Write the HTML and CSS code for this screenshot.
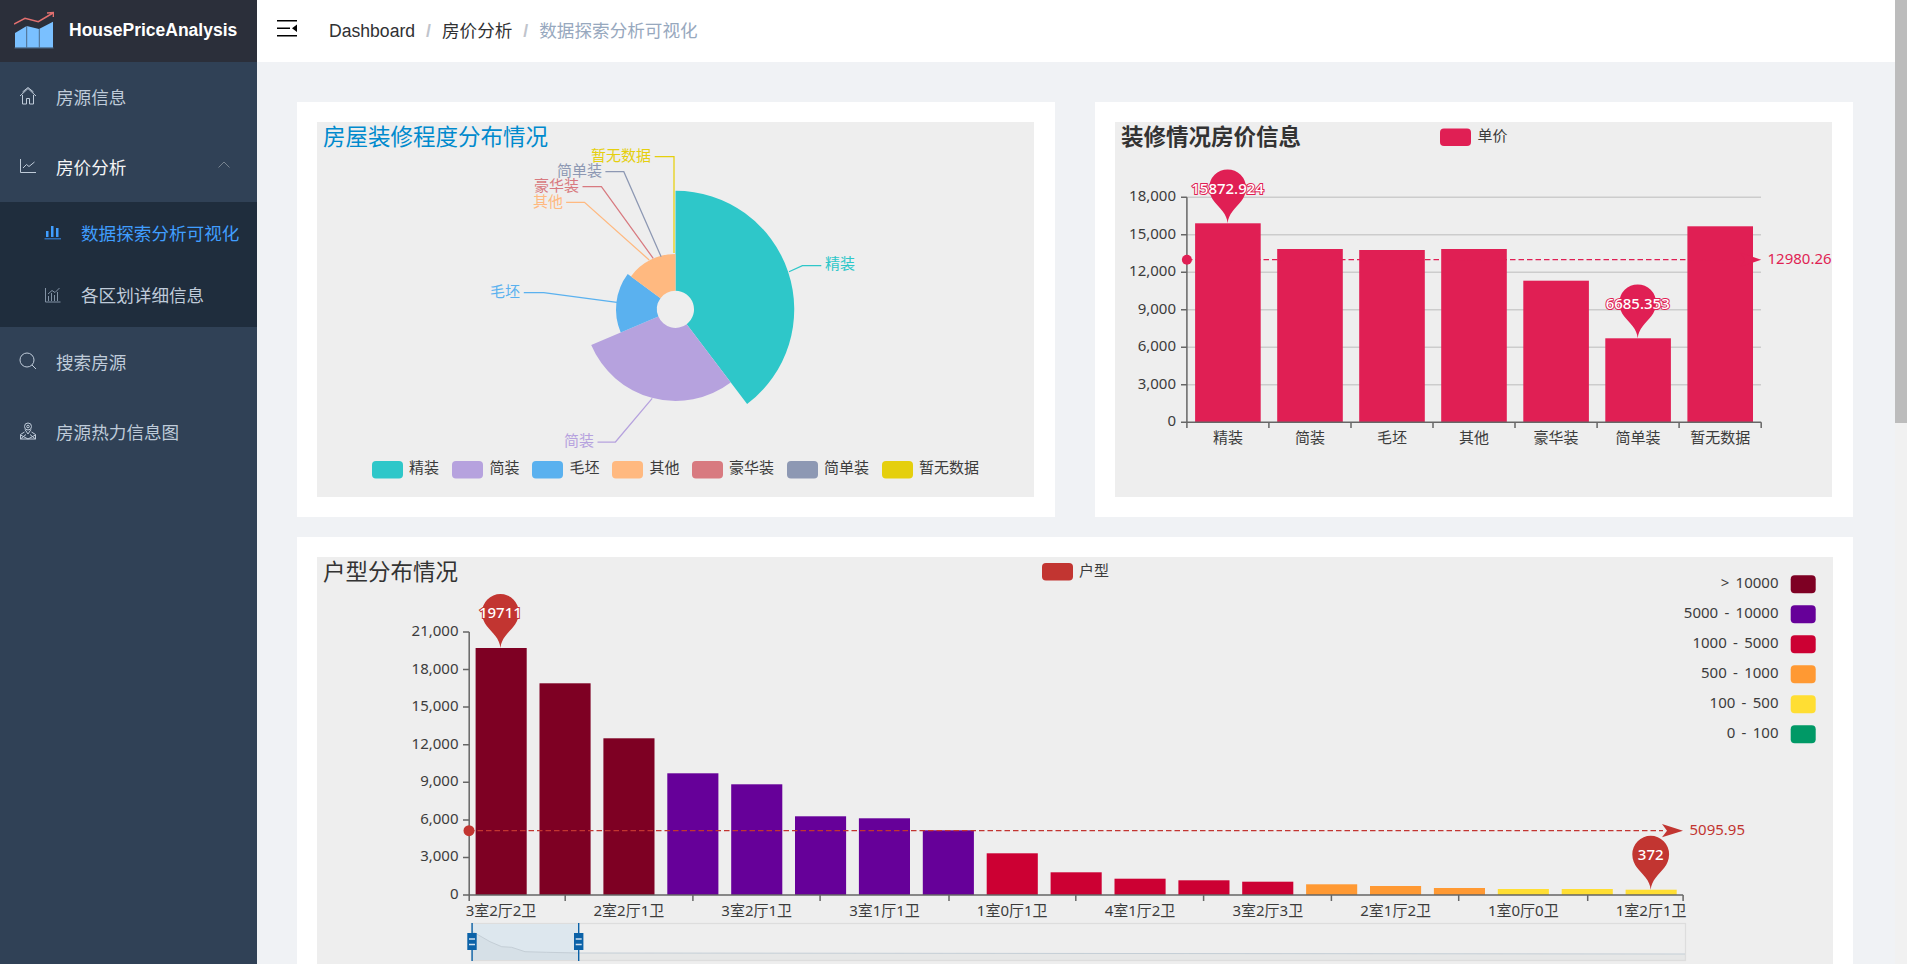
FILE: index.html
```html
<!DOCTYPE html>
<html lang="zh-CN">

<head>
    <meta charset="UTF-8">
    <title>HousePriceAnalysis</title>
    <link rel="stylesheet" href="styles.css">
</head>

<body>
    <aside class="sidebar">
        <div class="logo">
            <svg class="logo-icon" viewBox="0 0 40 38">
                <path class="logo-bars" d="M1 22 L12.700 15 L25 18 L39 10.700 V36.700 H1Z" />
                <path class="logo-gaps" d="M12.700 15 V36.700 M25.300 18 V36.700 M.5 37 H39.500" />
                <path class="logo-arrow" d="M0 13 L11 7.300 L24.300 10.700 L39 2 M33 2 L39.800 1.500 L39.300 6" />
            </svg>
            <span class="logo-text">HousePriceAnalysis</span>
        </div>
        <ul class="menu">
            <li class="menu-item">
                <svg class="icon" viewBox="0 0 18 18">
                    <path d="M1 9 L9 1.500 L17 9 M3.500 5 L9 .5 L14.500 5 M3.500 8 V17 H7.500 V11.500 H10.500 V17 H14.500 V8" />
                </svg>
                <span>房源信息</span>
            </li>
            <li class="menu-item is-open">
                <svg class="icon" viewBox="0 0 18 18">
                    <path d="M1.500 2 V15.500 H17 M4 11 L7.500 7.500 L10 9.500 L15.500 5" />
                </svg>
                <span>房价分析</span>
                <svg class="chevron" viewBox="0 0 12 7">
                    <path d="M.5 6.500 L6 1 L11.500 6.500" />
                </svg>
            </li>
            <li class="submenu">
                <div class="submenu-item is-active">
                    <svg class="icon icon-fill" viewBox="0 0 18 18">
                        <path d="M2 8 H4.500 V14 H2Z M7 3 H9.500 V14 H7Z M12 5 H14.500 V14 H12Z" />
                        <path class="icon-base" d="M.5 15 H17 V16.500 H.5Z" />
                    </svg>
                    <span>数据探索分析可视化</span>
                </div>
                <div class="submenu-item">
                    <svg class="icon icon-dim" viewBox="0 0 18 18">
                        <path d="M1.500 2 V16 H16.500 M4.500 15 V10 M7.500 15 V7 M10.500 15 V9 M13.500 15 V6 M4 8 L8 4.500 L11 6.500 L15.500 2" />
                    </svg>
                    <span>各区划详细信息</span>
                </div>
            </li>
            <li class="menu-item">
                <svg class="icon" viewBox="0 0 18 18">
                    <circle cx="8" cy="8" r="7" />
                    <path d="M13 13 L17 17" />
                </svg>
                <span>搜索房源</span>
            </li>
            <li class="menu-item">
                <svg class="icon" viewBox="0 0 18 18">
                    <circle cx="9" cy="4.500" r="3.500" />
                    <circle cx="9" cy="4.500" r="1.300" />
                    <path d="M6 7.500 L9 12 L12 7.500 M5.500 10 L1.500 12.500 V17 H16.500 V12.500 L12.500 10 M1.500 13 L9 17 M16.500 13 L9 17 M1.500 17 L7 12.500 M16.500 17 L11 12.500" />
                </svg>
                <span>房源热力信息图</span>
            </li>
        </ul>
    </aside>

    <div class="main">
        <header class="navbar">
            <svg class="hamburger" viewBox="0 0 20 17">
                <path d="M0 0 H20 V1.500 H0Z M0 7.500 H13 V9 H0Z M0 15 H20 V16.500 H0Z M20 4.500 V12 L15 8.250Z" />
            </svg>
            <nav class="breadcrumb">
                <span class="crumb">Dashboard</span>
                <span class="sep">/</span>
                <span class="crumb">房价分析</span>
                <span class="sep">/</span>
                <span class="crumb crumb-last">数据探索分析可视化</span>
            </nav>
        </header>

        <section class="content">
            <div class="row">
                <div class="card">
                    <div class="chart">
                        <svg class="plot" width="717" height="375" viewBox="0 0 717 375">
                            <text class="title title-blue" x="6" y="15">房屋装修程度分布情况</text>

                            <path class="c-jing" d="M358.5 68.7 A118.7 118.7 0 0 1 430.1 282.1 L369.7 202.2 A18.6 18.6 0 0 0 358.5 168.8Z" />
                            <path class="c-jian" d="M413.7 260.4 A91.5 91.5 0 0 1 274.2 223 L341.4 194.6 A18.6 18.6 0 0 0 369.7 202.2Z" />
                            <path class="c-mao" d="M303.7 210.6 A59.5 59.5 0 0 1 310.7 152 L343.5 176.3 A18.6 18.6 0 0 0 341.4 194.6Z" />
                            <path class="c-qi" d="M313.9 154.4 A55.5 55.5 0 0 1 358.5 131.900 L358.5 168.8 A18.6 18.6 0 0 0 343.5 176.3Z" />

                            <path class="guide g-jing" d="M472 149.700 L485.400 143.700 H504.300" />
                            <path class="guide g-mao" d="M299.900 180.300 L226.700 170.700 H206.800" />
                            <path class="guide g-jian" d="M335.200 276.300 L298.400 320 H280.500" />
                            <path class="guide g-qi" d="M332.200 138 L267.500 80.300 H249.100" />
                            <path class="guide g-hao" d="M336.200 136.300 L284.400 64.700 H265.500" />
                            <path class="guide g-dan" d="M344.100 134.700 L306.800 49.700 H288.400" />
                            <path class="guide g-zan" d="M357 131 V34.700 H337.700" />

                            <text class="label t-jing" x="508" y="142">精装</text>
                            <text class="label t-mao end" x="203" y="170">毛坯</text>
                            <text class="label t-jian end" x="277" y="319">简装</text>
                            <text class="label t-qi end" x="246" y="80">其他</text>
                            <text class="label t-hao end" x="262" y="64">豪华装</text>
                            <text class="label t-dan end" x="285" y="49">简单装</text>
                            <text class="label t-zan end" x="334" y="34">暂无数据</text>

                            <rect class="c-jing" x="55" y="339" width="31" height="17.500" rx="4" />
                            <text class="label" x="92" y="345.500">精装</text>
                            <rect class="c-jian" x="135" y="339" width="31" height="17.500" rx="4" />
                            <text class="label" x="172.500" y="345.500">简装</text>
                            <rect class="c-mao" x="215" y="339" width="31" height="17.500" rx="4" />
                            <text class="label" x="252.500" y="345.500">毛坯</text>
                            <rect class="c-qi" x="295" y="339" width="31" height="17.500" rx="4" />
                            <text class="label" x="332.500" y="345.500">其他</text>
                            <rect class="c-hao" x="375" y="339" width="31" height="17.500" rx="4" />
                            <text class="label" x="412" y="345.500">豪华装</text>
                            <rect class="c-dan" x="470" y="339" width="31" height="17.500" rx="4" />
                            <text class="label" x="507" y="345.500">简单装</text>
                            <rect class="c-zan" x="565" y="339" width="31" height="17.500" rx="4" />
                            <text class="label" x="602" y="345.500">暂无数据</text>
                        </svg>
                    </div>
                </div>

                <div class="card">
                    <div class="chart">
                        <svg class="plot" width="717" height="375" viewBox="0 0 717 375">
                            <defs>
                                <path id="pin" d="M0 0 C-.6 -5 -2 -8 -5 -12 C-10 -19 -18.400 -24 -18.400 -35.500 A18.400 18.400 0 0 1 18.400 -35.500 C18.400 -24 10 -19 5 -12 C2 -8 .6 -5 0 0Z" />
                            </defs>
                            <text class="title title-bold" x="6" y="15">装修情况房价信息</text>
                            <rect class="c-rose" x="325" y="6.500" width="31" height="17.500" rx="4" />
                            <text class="label" x="362.500" y="13.500">单价</text>

                            <path class="grid" d="M72 75.300 H646 M72 112.800 H646 M72 150.300 H646 M72 187.800 H646 M72 225.300 H646 M72 262.800 H646" />

                            <rect class="c-rose" x="80.100" y="101.300" width="65.600" height="199" />
                            <rect class="c-rose" x="162.200" y="127" width="65.600" height="173.300" />
                            <rect class="c-rose" x="244.200" y="128" width="65.600" height="172.300" />
                            <rect class="c-rose" x="326.200" y="127" width="65.600" height="173.300" />
                            <rect class="c-rose" x="408.300" y="158.700" width="65.600" height="141.600" />
                            <rect class="c-rose" x="490.300" y="216.300" width="65.600" height="84" />
                            <rect class="c-rose" x="572.400" y="104.300" width="65.600" height="196" />

                            <path class="axis" d="M71.900 75.300 V300.300 H646.200 M66 75.300 H71.900 M66 112.800 H71.900 M66 150.300 H71.900 M66 187.800 H71.900 M66 225.300 H71.900 M66 262.800 H71.900 M66 300.300 H71.900 M71.900 300.300 V306 M153.900 300.300 V306 M236 300.300 V306 M318 300.300 V306 M400 300.300 V306 M482.100 300.300 V306 M564.100 300.300 V306 M646.200 300.300 V306" />

                            <text class="label end" x="61" y="74">18,000</text>
                            <text class="label end" x="61" y="111.500">15,000</text>
                            <text class="label end" x="61" y="149">12,000</text>
                            <text class="label end" x="61" y="186.500">9,000</text>
                            <text class="label end" x="61" y="224">6,000</text>
                            <text class="label end" x="61" y="261.500">3,000</text>
                            <text class="label end" x="61" y="299">0</text>

                            <text class="label mid" x="112.900" y="315.500">精装</text>
                            <text class="label mid" x="195" y="315.500">简装</text>
                            <text class="label mid" x="277" y="315.500">毛坯</text>
                            <text class="label mid" x="359" y="315.500">其他</text>
                            <text class="label mid" x="441.100" y="315.500">豪华装</text>
                            <text class="label mid" x="523.100" y="315.500">简单装</text>
                            <text class="label mid" x="605.200" y="315.500">暂无数据</text>

                            <path class="mean mean-rose" d="M72 137.700 H640" />
                            <circle class="c-rose" cx="71.900" cy="137.700" r="5" />
                            <path class="c-rose" d="M646.200 137.700 L625 130.500 L630 137.700 L625 145Z" />
                            <text class="label t-rose" x="652.500" y="137">12980.26</text>

                            <use class="c-rose" href="#pin" x="112.600" y="101.300" />
                            <text class="pin-text pin-rose" x="112.600" y="67.300">15872.924</text>
                            <use class="c-rose" href="#pin" x="522.700" y="216.300" />
                            <text class="pin-text pin-rose" x="522.700" y="182.300">6685.353</text>
                        </svg>
                    </div>
                </div>
            </div>

            <div class="card">
                <div class="chart">
                    <svg class="plot" width="1517" height="470" viewBox="0 0 1517 470">
                        <text class="title" x="6" y="15">户型分布情况</text>
                        <rect class="c-red" x="725" y="6" width="31" height="17.500" rx="4" />
                        <text class="label" x="762" y="13.500">户型</text>

                        <rect class="v1" x="158.600" y="91" width="51.100" height="247" />
                        <rect class="v1" x="222.500" y="126.300" width="51.100" height="211.700" />
                        <rect class="v1" x="286.400" y="181.300" width="51.100" height="156.700" />
                        <rect class="v2" x="350.300" y="216.300" width="51.100" height="121.700" />
                        <rect class="v2" x="414.200" y="227.300" width="51.100" height="110.700" />
                        <rect class="v2" x="478" y="259.300" width="51.100" height="78.700" />
                        <rect class="v2" x="541.900" y="261.300" width="51.100" height="76.700" />
                        <rect class="v2" x="605.800" y="273.300" width="51.100" height="64.700" />
                        <rect class="v3" x="669.700" y="296.300" width="51.100" height="41.700" />
                        <rect class="v3" x="733.600" y="315.300" width="51.100" height="22.700" />
                        <rect class="v3" x="797.500" y="321.700" width="51.100" height="16.300" />
                        <rect class="v3" x="861.400" y="323.300" width="51.100" height="14.700" />
                        <rect class="v3" x="925.200" y="324.700" width="51.100" height="13.300" />
                        <rect class="v4" x="989.100" y="327.300" width="51.100" height="10.700" />
                        <rect class="v4" x="1053" y="329" width="51.100" height="9" />
                        <rect class="v4" x="1116.900" y="331" width="51.100" height="7" />
                        <rect class="v5" x="1180.800" y="332" width="51.100" height="6" />
                        <rect class="v5" x="1244.700" y="332" width="51.100" height="6" />
                        <rect class="v5" x="1308.600" y="332.700" width="51.100" height="5.300" />

                        <path class="axis" d="M152.200 75 V338 H1366.100 M146 75 H152.200 M146 112.600 H152.200 M146 150.100 H152.200 M146 187.700 H152.200 M146 225.300 H152.200 M146 262.900 H152.200 M146 300.400 H152.200 M146 338 H152.200 M152.200 338 V344 M248.200 338 V344 M375.900 338 V344 M503.100 338 V344 M632 338 V344 M758.800 338 V344 M886.600 338 V344 M1014.400 338 V344 M1141.700 338 V344 M1270.700 338 V344 M1366.100 338 V344" />

                        <text class="label end" x="141.500" y="74">21,000</text>
                        <text class="label end" x="141.500" y="111.500">18,000</text>
                        <text class="label end" x="141.500" y="149">15,000</text>
                        <text class="label end" x="141.500" y="186.500">12,000</text>
                        <text class="label end" x="141.500" y="224">9,000</text>
                        <text class="label end" x="141.500" y="261.500">6,000</text>
                        <text class="label end" x="141.500" y="299">3,000</text>
                        <text class="label end" x="141.500" y="337">0</text>

                        <text class="label mid" x="184" y="353.700">3室2厅2卫</text>
                        <text class="label mid" x="311.900" y="353.700">2室2厅1卫</text>
                        <text class="label mid" x="439.700" y="353.700">3室2厅1卫</text>
                        <text class="label mid" x="567.500" y="353.700">3室1厅1卫</text>
                        <text class="label mid" x="695.200" y="353.700">1室0厅1卫</text>
                        <text class="label mid" x="823" y="353.700">4室1厅2卫</text>
                        <text class="label mid" x="950.800" y="353.700">3室2厅3卫</text>
                        <text class="label mid" x="1078.600" y="353.700">2室1厅2卫</text>
                        <text class="label mid" x="1206.300" y="353.700">1室0厅0卫</text>
                        <text class="label mid" x="1334.100" y="353.700">1室2厅1卫</text>

                        <path class="mean mean-red" d="M152 273.700 H1346" />
                        <circle class="c-red" cx="152" cy="273.700" r="5.500" />
                        <path class="c-red" d="M1366 273.700 L1345 267 L1350 273.700 L1345 280.300Z" />
                        <text class="label t-red" x="1372.500" y="273">5095.95</text>

                        <use class="c-red" href="#pin" x="183.400" y="91" />
                        <text class="pin-text pin-red" x="183.400" y="56.300">19711</text>
                        <use class="c-red" href="#pin" x="1333.700" y="332.700" />
                        <text class="pin-text pin-red" x="1333.700" y="298.300">372</text>

                        <text class="label end range" x="1461.500" y="25.500">&gt; 10000</text>
                        <rect class="v1" x="1473.700" y="18.300" width="25" height="18" rx="4" />
                        <text class="label end range" x="1461.500" y="55.500">5000 - 10000</text>
                        <rect class="v2" x="1473.700" y="48.300" width="25" height="18" rx="4" />
                        <text class="label end range" x="1461.500" y="85.500">1000 - 5000</text>
                        <rect class="v3" x="1473.700" y="78.300" width="25" height="18" rx="4" />
                        <text class="label end range" x="1461.500" y="115.500">500 - 1000</text>
                        <rect class="v4" x="1473.700" y="108.300" width="25" height="18" rx="4" />
                        <text class="label end range" x="1461.500" y="145.500">100 - 500</text>
                        <rect class="v5" x="1473.700" y="138.300" width="25" height="18" rx="4" />
                        <text class="label end range" x="1461.500" y="175.500">0 - 100</text>
                        <rect class="v6" x="1473.700" y="168.300" width="25" height="18" rx="4" />

                        <rect class="zoom-frame" x="154.500" y="366.500" width="1214" height="37" />
                        <rect class="zoom-range" x="155.800" y="367" width="106" height="36" />
                        <path class="zoom-area" d="M155.700 374.700 L173 384.700 L184.700 389.700 L194.700 390.300 L208 394.700 L229.700 395.300 L261.400 396 L1368 397 V403 H155.700Z" />
                        <path class="zoom-line" d="M155.700 374.700 L173 384.700 L184.700 389.700 L194.700 390.300 L208 394.700 L229.700 395.300 L261.400 396 L1368 397" />
                        <g class="zoom-handle">
                            <path d="M154.400 366 H155.800 V404 H154.400Z M150.300 376 H159.700 V393 H150.300Z M261 366 H262.400 V404 H261Z M257 376 H266.400 V393 H257Z" />
                        </g>
                        <path class="zoom-grip" d="M152 382 H158 M152 387.500 H158 M258.700 382 H264.700 M258.700 387.500 H264.700" />
                    </svg>
                </div>
            </div>
        </section>
    </div>

    <div class="scrollbar">
        <div class="scrollbar-thumb"></div>
    </div>
</body>

</html>
```

FILE: styles.css
```css
html,
body {
    height: 100%;
}

body {
    margin: 0;
    display: flex;
    overflow: hidden;
    font-family: "Liberation Sans", "Noto Sans CJK SC", sans-serif;
    font-size: 17.6px;
    background-color: #f0f2f5;
}

ul {
    margin: 0;
    padding: 0;
    list-style: none;
}

/* sidebar */
.sidebar {
    flex: none;
    width: 257px;
    background-color: #304156;
    color: #bfcbd9;
}

.logo {
    height: 62px;
    display: flex;
    align-items: center;
    gap: 15px;
    padding-left: 14px;
    background-color: #2b2f3a;
}

.logo-icon {
    width: 40px;
    height: 38px;
    flex: none;
    margin-bottom: 2px;
}

.logo-bars {
    fill: #7ac0ff;
}

.logo-gaps {
    fill: none;
    stroke: #4d6a88;
    stroke-width: 1;
}

.logo-arrow {
    fill: none;
    stroke: #e2706f;
    stroke-width: 1.500;
}

.logo-text {
    color: #fff;
    font-weight: bold;
    font-size: 17.5px;
    margin-bottom: 1px;
}

.menu-item {
    box-sizing: border-box;
    height: 70px;
    display: flex;
    align-items: center;
    gap: 19px;
    padding-left: 19px;
    padding-bottom: 2px;
}

.menu-item.is-open {
    color: #f4f4f5;
}

.icon {
    width: 18px;
    height: 18px;
    flex: none;
    fill: none;
    stroke: #bfcbd9;
    stroke-width: 1;
}

.icon-fill {
    fill: #409eff;
    stroke: none;
}

.icon-fill .icon-base {
    fill: #2f6db5;
}

.icon-dim {
    stroke: #8292a5;
}

.chevron {
    width: 12px;
    height: 7px;
    margin-left: auto;
    margin-right: 27px;
    margin-top: -4px;
    fill: none;
    stroke: #77838f;
    stroke-width: 1;
}

.submenu {
    background-color: #1f2d3d;
}

.submenu-item {
    box-sizing: border-box;
    height: 62.5px;
    display: flex;
    align-items: center;
    gap: 19px;
    padding-left: 44px;
    padding-bottom: 2px;
}

.submenu-item.is-active {
    color: #409eff;
}

/* top bar */
.main {
    flex: 1;
    min-width: 0;
    display: flex;
    flex-direction: column;
}

.navbar {
    flex: none;
    height: 62px;
    display: flex;
    align-items: center;
    padding-left: 20px;
    background-color: #fff;
}

.hamburger {
    width: 20px;
    height: 17px;
    margin-right: 32px;
    margin-bottom: 5px;
}

.breadcrumb {
    display: flex;
    align-items: baseline;
    gap: 11px;
    margin-bottom: 3px;
    color: #303133;
}

.sep {
    color: #c0c4cc;
    font-weight: bold;
}

.crumb-last {
    color: #97a8be;
}

/* content */
.content {
    flex: 1;
    min-height: 0;
    overflow: hidden;
    padding: 40px 42px 0 40px;
}

.row {
    display: grid;
    grid-template-columns: 1fr 1fr;
    gap: 40px;
    margin-bottom: 20px;
}

.card {
    padding: 20px;
    background-color: #fff;
}

.row .card {
    padding-right: 21px;
}

.chart {
    background-color: #eee;
}

.plot {
    display: block;
    font-family: "Noto Sans", "Noto Sans CJK SC", sans-serif;
}

.plot text {
    dominant-baseline: central;
    transform: translateY(-1px);
}

.title {
    font-size: 22.5px;
    fill: #333;
}

.title-blue {
    fill: #008acd;
}

.title-bold {
    font-weight: bold;
}

.label {
    font-size: 15px;
    fill: #3c3c3c;
}

.range {
    word-spacing: 2.4px;
}

.end {
    text-anchor: end;
}

.mid {
    text-anchor: middle;
}

.pin-text {
    font-size: 15px;
    font-weight: 500;
    fill: #fff;
    text-anchor: middle;
    stroke-width: 2px;
    paint-order: stroke;
}

.pin-rose {
    stroke: #e01f54;
}

.pin-red {
    stroke: #c23531;
}

/* pie colours */
.c-jing {
    fill: #2ec7c9;
}

.c-jian {
    fill: #b6a2de;
}

.c-mao {
    fill: #5ab1ef;
}

.c-qi {
    fill: #ffb980;
}

.c-hao {
    fill: #d87a80;
}

.c-dan {
    fill: #8d98b3;
}

.c-zan {
    fill: #e5cf0d;
}

.label.t-jing {
    fill: #2ec7c9;
}

.label.t-jian {
    fill: #b6a2de;
}

.label.t-mao {
    fill: #5ab1ef;
}

.label.t-qi {
    fill: #ffb980;
}

.label.t-hao {
    fill: #d87a80;
}

.label.t-dan {
    fill: #8d98b3;
}

.label.t-zan {
    fill: #e5cf0d;
}

.guide {
    fill: none;
    stroke-width: 1.250;
}

.g-jing {
    stroke: #2ec7c9;
}

.g-jian {
    stroke: #b6a2de;
}

.g-mao {
    stroke: #5ab1ef;
}

.g-qi {
    stroke: #ffb980;
}

.g-hao {
    stroke: #d87a80;
}

.g-dan {
    stroke: #8d98b3;
}

.g-zan {
    stroke: #e5cf0d;
}

/* bar charts */
.c-rose {
    fill: #e01f54;
}

.c-red {
    fill: #c23531;
}

.label.t-rose {
    fill: #e01f54;
}

.label.t-red {
    fill: #c23531;
}

.v1 {
    fill: #7e0023;
}

.v2 {
    fill: #660099;
}

.v3 {
    fill: #cc0033;
}

.v4 {
    fill: #ff9933;
}

.v5 {
    fill: #ffde33;
}

.v6 {
    fill: #009966;
}

.grid {
    fill: none;
    stroke: #ccc;
    stroke-width: 1.500;
}

.axis {
    fill: none;
    stroke: #666;
    stroke-width: 1.500;
}

.mean {
    fill: none;
    stroke-width: 1.250;
    stroke-dasharray: 5.500 3;
}

.mean-rose {
    stroke: #e01f54;
}

.mean-red {
    stroke: #c23531;
}

/* data zoom */
.zoom-frame {
    fill: none;
    stroke: #ddd;
    stroke-width: 1.250;
}

.zoom-range {
    fill: #dde7ee;
}

.zoom-area {
    fill: rgba(47, 69, 84, 0.04);
}

.zoom-line {
    fill: none;
    stroke: #c4ced6;
    stroke-width: 1;
}

.zoom-handle {
    fill: #0b62a8;
}

.zoom-grip {
    fill: none;
    stroke: #cfe0ee;
    stroke-width: 1.500;
}

/* page scrollbar */
.scrollbar {
    flex: none;
    width: 12px;
    background-color: #f1f1f1;
}

.scrollbar-thumb {
    height: 423px;
    background-color: #bcbcbc;
}
```
